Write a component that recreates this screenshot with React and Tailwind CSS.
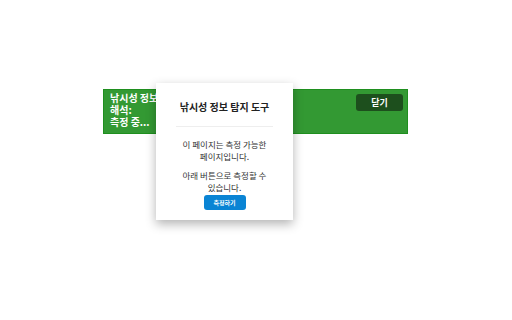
import React from "react";

export default function App() {
  const font = { fontFamily: '"Noto Sans CJK KR", "Noto Sans", sans-serif' };
  return (
    <div className="relative w-[512px] h-[320px] bg-white" style={font}>
      <div className="pt-[89px] pl-[103px]">
        <div className="w-[305px] h-[45px] bg-[#339933] border border-[#1f8f1f] flex justify-between items-start pl-[6px] pr-[4px] pt-[2px]">
          <div className="text-white text-[10px] leading-[12px] font-bold">
            <div>낚시성 정보</div>
            <div>해석:</div>
            <div>측정 중...</div>
          </div>
          <button className="mt-[2px] w-[47px] h-[17px] rounded-[3px] bg-[#1d4f1d] text-white text-[9px] leading-[17px] font-bold">
            닫기
          </button>
        </div>
      </div>
      <div className="absolute left-[156px] top-[83px] w-[137px] bg-white shadow-[0_4px_10px_rgba(0,0,0,0.3)] pt-[18px] px-[20px] pb-[10px] flex flex-col items-center text-center">
        <div className="text-[10px] leading-[12px] font-bold text-[#222]">낚시성 정보 탐지 도구</div>
        <div className="mt-[13px] w-full h-px bg-[#eeeeee]" />
        <div className="mt-[11px] text-[8.5px] leading-[12px] text-[#333]">
          이 페이지는 측정 가능한
          <br />
          페이지입니다.
        </div>
        <div className="mt-[7px] text-[8.5px] leading-[12px] text-[#333]">
          아래 버튼으로 측정할 수
          <br />
          있습니다.
        </div>
        <button className="mt-[2px] w-[42px] h-[15px] rounded-[3px] bg-[#0a84d4] text-white text-[6px] leading-[15px] font-bold">
          측정하기
        </button>
      </div>
    </div>
  );
}
